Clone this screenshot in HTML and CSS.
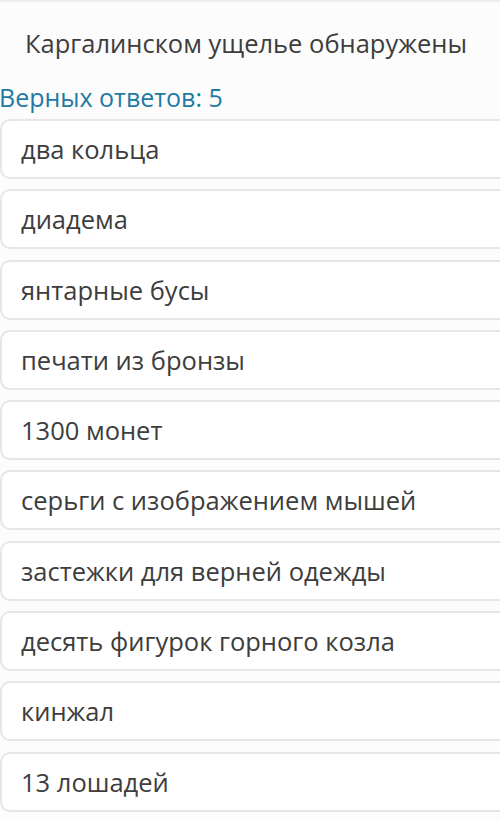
FILE: index.html
```html
<!DOCTYPE html>
<html lang="ru">
<head>
    <meta charset="UTF-8">
    <meta name="viewport" content="width=device-width, initial-scale=1.0">
    <title>Каргалинском ущелье</title>
    <link rel="stylesheet" href="styles.css">
</head>
<body>

    <div class="top-edge"></div>

    <div class="question">
        <p class="question-text">Каргалинском ущелье обнаружены</p>
        <p class="answers-count">Верных ответов: 5</p>
    </div>

    <ul class="options">
        <li class="option">два кольца</li>
        <li class="option">диадема</li>
        <li class="option">янтарные бусы</li>
        <li class="option">печати из бронзы</li>
        <li class="option">1300 монет</li>
        <li class="option">серьги с изображением мышей</li>
        <li class="option">застежки для верней одежды</li>
        <li class="option">десять фигурок горного козла</li>
        <li class="option">кинжал</li>
        <li class="option">13 лошадей</li>
    </ul>

</body>
</html>
```

FILE: styles.css
```css
body {
    margin: 0;
    font-family: "Open Sans", Arial, sans-serif;
    background-color: #fcfcfc;
    overflow: hidden;
}

.top-edge {
    height: 2px;
    background-color: #ececec;
}

.question-text {
    margin: 24px 0 0 25px;
    font-size: 25.5px;
    line-height: 34px;
    color: #3d3d3d;
}

.answers-count {
    margin: 20px 0 0 -1px;
    font-size: 25px;
    line-height: 34px;
    color: #1f7aa3;
}

.options {
    list-style: none;
    margin: 5px -30px 0 0;
    padding: 0;
    display: flex;
    flex-direction: column;
    gap: 10.3px;
}

.option {
    height: 56px;
    display: flex;
    align-items: center;
    padding-left: 19px;
    background-color: #ffffff;
    border: 2px solid #e6e6e6;
    border-radius: 10px;
    font-size: 25.5px;
    color: #3d3d3d;
}
```
